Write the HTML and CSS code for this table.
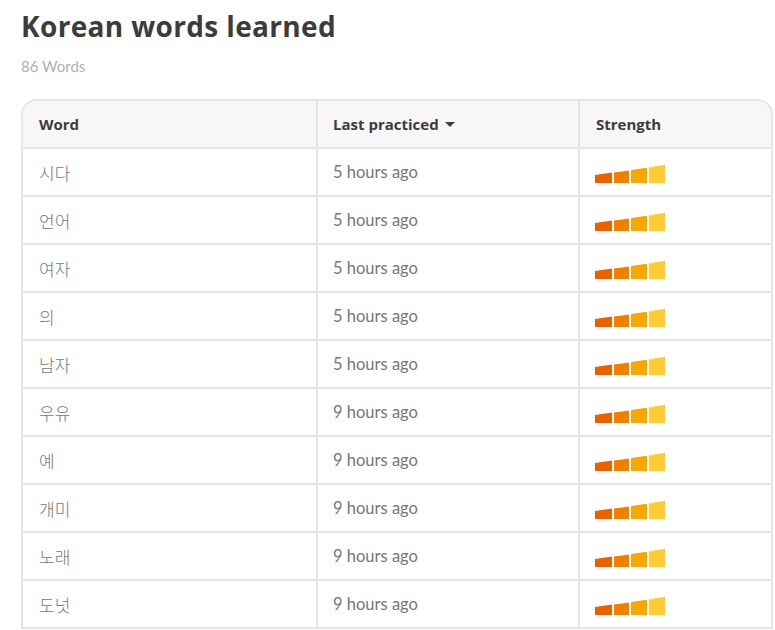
FILE: index.html
```html
<!DOCTYPE html>
<html lang="en">
<head>
<meta charset="utf-8">
<title>Korean words learned</title>
<link rel="stylesheet" href="styles.css">
</head>
<body>
<main class="page">
  <h1 class="title">Korean words learned</h1>
  <div class="count">86 Words</div>
  <div class="table">
    <div class="row head">
      <div class="cell">Word</div>
      <div class="cell">Last practiced <span class="caret"></span></div>
      <div class="cell">Strength</div>
    </div>
    <div class="row"><div class="cell word">시다</div><div class="cell time">5 hours ago</div><div class="cell"><svg class="bars" width="71" height="19" viewBox="0 0 71 19"><polygon points="0,11 17,8.6 17,19 0,19" fill="#ea6300"/><polygon points="19,8.6 34,6.5 34,19 19,19" fill="#f08100"/><polygon points="36,6 52,3.7 52,19 36,19" fill="#f6a800"/><polygon points="54,3.3 70,0.8 70,19 54,19" fill="#ffcd33"/></svg></div></div>
    <div class="row"><div class="cell word">언어</div><div class="cell time">5 hours ago</div><div class="cell"><svg class="bars" width="71" height="19" viewBox="0 0 71 19"><polygon points="0,11 17,8.6 17,19 0,19" fill="#ea6300"/><polygon points="19,8.6 34,6.5 34,19 19,19" fill="#f08100"/><polygon points="36,6 52,3.7 52,19 36,19" fill="#f6a800"/><polygon points="54,3.3 70,0.8 70,19 54,19" fill="#ffcd33"/></svg></div></div>
    <div class="row"><div class="cell word">여자</div><div class="cell time">5 hours ago</div><div class="cell"><svg class="bars" width="71" height="19" viewBox="0 0 71 19"><polygon points="0,11 17,8.6 17,19 0,19" fill="#ea6300"/><polygon points="19,8.6 34,6.5 34,19 19,19" fill="#f08100"/><polygon points="36,6 52,3.7 52,19 36,19" fill="#f6a800"/><polygon points="54,3.3 70,0.8 70,19 54,19" fill="#ffcd33"/></svg></div></div>
    <div class="row"><div class="cell word">의</div><div class="cell time">5 hours ago</div><div class="cell"><svg class="bars" width="71" height="19" viewBox="0 0 71 19"><polygon points="0,11 17,8.6 17,19 0,19" fill="#ea6300"/><polygon points="19,8.6 34,6.5 34,19 19,19" fill="#f08100"/><polygon points="36,6 52,3.7 52,19 36,19" fill="#f6a800"/><polygon points="54,3.3 70,0.8 70,19 54,19" fill="#ffcd33"/></svg></div></div>
    <div class="row"><div class="cell word">남자</div><div class="cell time">5 hours ago</div><div class="cell"><svg class="bars" width="71" height="19" viewBox="0 0 71 19"><polygon points="0,11 17,8.6 17,19 0,19" fill="#ea6300"/><polygon points="19,8.6 34,6.5 34,19 19,19" fill="#f08100"/><polygon points="36,6 52,3.7 52,19 36,19" fill="#f6a800"/><polygon points="54,3.3 70,0.8 70,19 54,19" fill="#ffcd33"/></svg></div></div>
    <div class="row"><div class="cell word">우유</div><div class="cell time">9 hours ago</div><div class="cell"><svg class="bars" width="71" height="19" viewBox="0 0 71 19"><polygon points="0,11 17,8.6 17,19 0,19" fill="#ea6300"/><polygon points="19,8.6 34,6.5 34,19 19,19" fill="#f08100"/><polygon points="36,6 52,3.7 52,19 36,19" fill="#f6a800"/><polygon points="54,3.3 70,0.8 70,19 54,19" fill="#ffcd33"/></svg></div></div>
    <div class="row"><div class="cell word">예</div><div class="cell time">9 hours ago</div><div class="cell"><svg class="bars" width="71" height="19" viewBox="0 0 71 19"><polygon points="0,11 17,8.6 17,19 0,19" fill="#ea6300"/><polygon points="19,8.6 34,6.5 34,19 19,19" fill="#f08100"/><polygon points="36,6 52,3.7 52,19 36,19" fill="#f6a800"/><polygon points="54,3.3 70,0.8 70,19 54,19" fill="#ffcd33"/></svg></div></div>
    <div class="row"><div class="cell word">개미</div><div class="cell time">9 hours ago</div><div class="cell"><svg class="bars" width="71" height="19" viewBox="0 0 71 19"><polygon points="0,11 17,8.6 17,19 0,19" fill="#ea6300"/><polygon points="19,8.6 34,6.5 34,19 19,19" fill="#f08100"/><polygon points="36,6 52,3.7 52,19 36,19" fill="#f6a800"/><polygon points="54,3.3 70,0.8 70,19 54,19" fill="#ffcd33"/></svg></div></div>
    <div class="row"><div class="cell word">노래</div><div class="cell time">9 hours ago</div><div class="cell"><svg class="bars" width="71" height="19" viewBox="0 0 71 19"><polygon points="0,11 17,8.6 17,19 0,19" fill="#ea6300"/><polygon points="19,8.6 34,6.5 34,19 19,19" fill="#f08100"/><polygon points="36,6 52,3.7 52,19 36,19" fill="#f6a800"/><polygon points="54,3.3 70,0.8 70,19 54,19" fill="#ffcd33"/></svg></div></div>
    <div class="row"><div class="cell word">도넛</div><div class="cell time">9 hours ago</div><div class="cell"><svg class="bars" width="71" height="19" viewBox="0 0 71 19"><polygon points="0,11 17,8.6 17,19 0,19" fill="#ea6300"/><polygon points="19,8.6 34,6.5 34,19 19,19" fill="#f08100"/><polygon points="36,6 52,3.7 52,19 36,19" fill="#f6a800"/><polygon points="54,3.3 70,0.8 70,19 54,19" fill="#ffcd33"/></svg></div></div>
  </div>
</main>
</body>
</html>
```

FILE: styles.css
```css
* { box-sizing: border-box; }
html, body { margin: 0; padding: 0; background: #fff; }
body {
  font-family: Lato, "Noto Sans", sans-serif;
  color: #3c3c3c;
  overflow: hidden;
}
.page {
  padding: 8px 0 0 21px;
  width: 775px;
}
.title {
  margin: 0;
  font-family: "Open Sans", Lato, sans-serif;
  font-size: 28px;
  font-weight: 700;
  line-height: 36px;
  letter-spacing: 0.35px;
  color: #3c3c3c;
}
.count {
  margin-top: 12px;
  font-size: 15px;
  line-height: 20px;
  color: #afafaf;
}
.table {
  margin-top: 23px;
  width: 752px;
  border: 2px solid #e5e5e5;
  border-bottom: none;
  border-radius: 16px 16px 0 0;
  overflow: hidden;
}
.row {
  display: grid;
  grid-template-columns: 295px 262px 1fr;
  height: 48px;
}
.cell {
  display: flex;
  align-items: center;
  padding-left: 15px;
  border-right: 2px solid #e5e5e5;
  border-bottom: 2px solid #e5e5e5;
  font-size: 16px;
  color: #777;
}
.cell:first-child { padding-left: 16px; }
.cell:last-child { border-right: none; padding-left: 16px; }
.head { background: #f7f7f7; }
.head .cell {
  font-family: "Open Sans", Lato, sans-serif;
  font-weight: 700;
  font-size: 15px;
  color: #3c3c3c;
}
.caret {
  display: inline-block;
  width: 0; height: 0;
  margin-left: 6px;
  border-left: 5px solid transparent;
  border-right: 5px solid transparent;
  border-top: 5px solid #3c3c3c;
}
.word {
  font-family: "Noto Sans CJK KR", sans-serif;
  font-weight: 300;
  font-size: 17px;
  color: #777;
}
.time { color: #777; font-size: 16.5px; }
.bars { display: block; margin-top: 3px; margin-left: -1px; }
```
